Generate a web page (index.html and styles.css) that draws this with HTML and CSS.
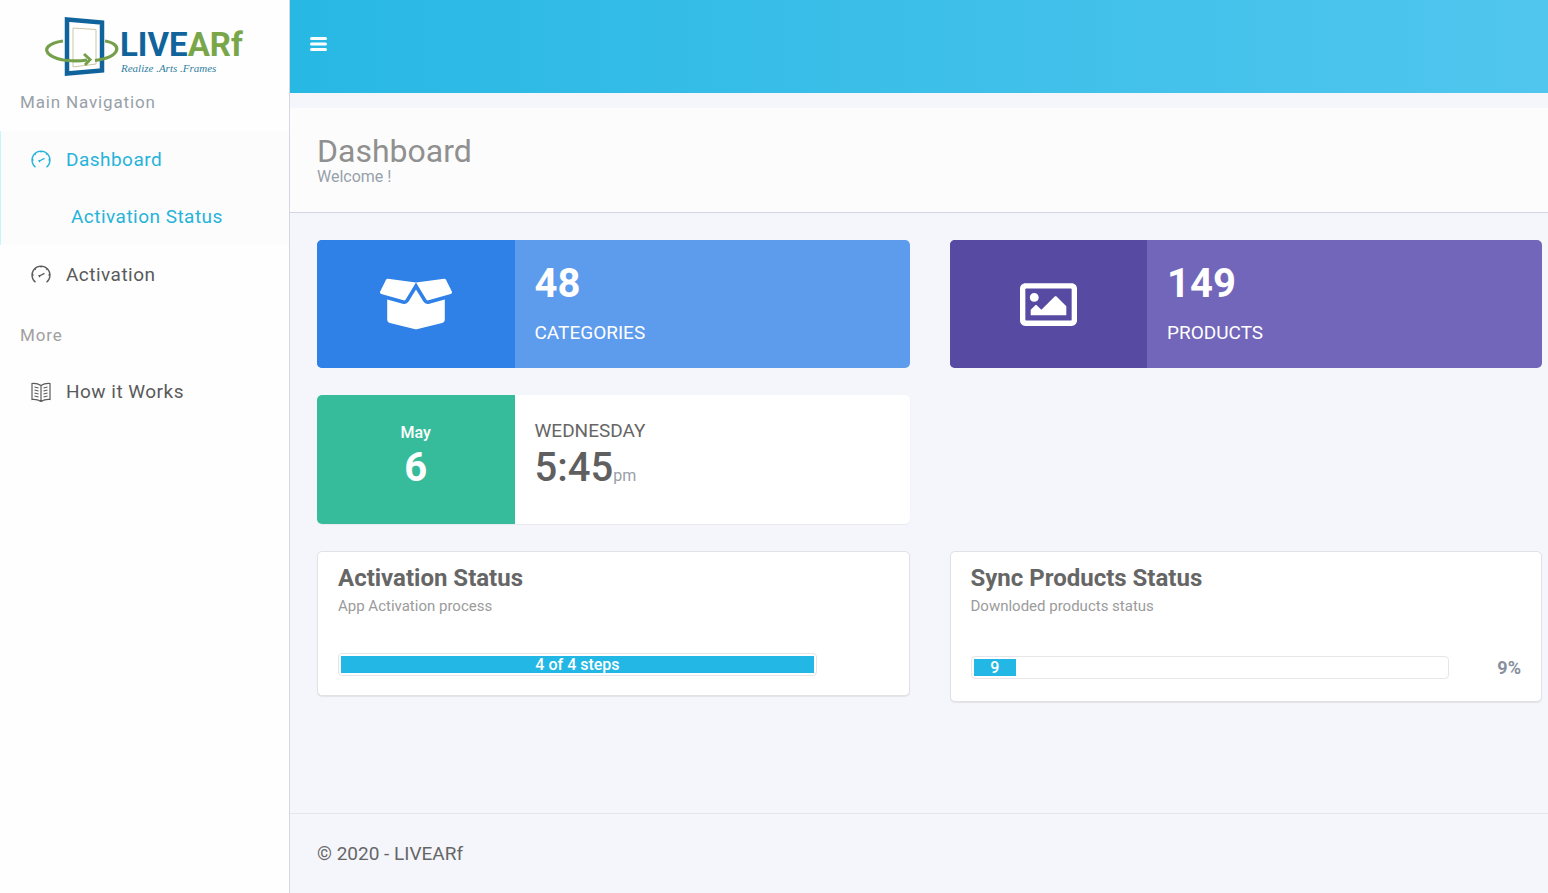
FILE: index.html
```html
<!DOCTYPE html>
<html lang="en">
<head>
<meta charset="utf-8">
<title>Dashboard - LIVEARf</title>
<link rel="stylesheet" href="styles.css">
</head>
<body>
<svg class="sprite" aria-hidden="true">
  <symbol id="gauge" viewBox="0 0 20 20">
    <path d="M4.500 17.200A9 9 0 1 1 15.500 17.200M8.300 11L13.500 8.300M7.600 10.200l1.400 1.900M10 1v1.600M3.600 3.600l1.100 1.100M16.400 3.600l-1.100 1.100M1 10h1.600M17.400 10h1.600" fill="none" stroke="currentColor" stroke-width="1.300"/>
  </symbol>
</svg>
<div class="app">
  <aside class="sidebar">
    <a class="logo" href="#" aria-label="LIVEARf home">
      <svg viewBox="0 0 200 66" role="img" aria-label="LIVEARf">
        <path d="M22 9.500L57 12.500V60.500L22 63.500Z" fill="#fff" stroke="#10649b" stroke-width="4.500"/>
        <path d="M28 18L51 19.500V54L28 57Z" fill="none" stroke="#c9c7a8" stroke-width="1"/>
        <path d="M18 31C4 33-3 39 5 45C13 51 31 52 42 50" fill="none" stroke="#75a04b" stroke-width="3.200"/>
        <path d="M39 44L45 49.500L40 55" fill="none" stroke="#75a04b" stroke-width="3"/>
        <path d="M50 50.500C76 47 78 34 60 31" fill="none" stroke="#75a04b" stroke-width="3.200"/>
        <text class="logo-name" x="75" y="46"><tspan fill="#10649b">LIVE</tspan><tspan fill="#7aa64a">ARf</tspan></text>
        <text class="logo-tag" x="76" y="62">Realize .Arts .Frames</text>
      </svg>
    </a>
    <nav aria-label="Main">
      <h2 class="nav-title">Main Navigation</h2>
      <ul class="nav-list">
        <li class="nav-group">
          <a class="nav-link" href="#"><svg class="nav-icon"><use href="#gauge"/></svg>Dashboard</a>
          <a class="nav-link nav-sub" href="#">Activation Status</a>
        </li>
        <li><a class="nav-link" href="#"><svg class="nav-icon"><use href="#gauge"/></svg>Activation</a></li>
      </ul>
      <h2 class="nav-title nav-more">More</h2>
      <ul class="nav-list">
        <li><a class="nav-link" href="#">
          <svg class="nav-icon" viewBox="0 0 20 20"><path d="M1 1.500Q6 1 10 3.500Q14 1 19 1.500V17.500Q14 17 10 19.500Q6 17 1 17.500ZM10 3.500V19.500M3.500 5l4 1M3.500 8l4 1M3.500 11l4 1M3.500 14l4 1M16.500 5l-4 1M16.500 8l-4 1M16.500 11l-4 1M16.500 14l-4 1" fill="none" stroke="currentColor" stroke-width="1.200"/></svg>How it Works</a></li>
      </ul>
    </nav>
  </aside>
  <div class="page">
    <header class="topbar">
      <button class="menu" type="button" aria-label="Toggle menu">
        <svg viewBox="0 0 18 16"><path d="M1.500 2.500H15.500M1.500 8H15.500M1.500 13.500H15.500" stroke="#fff" stroke-width="3" stroke-linecap="round"/></svg>
      </button>
    </header>
    <div class="heading">
      <h1>Dashboard</h1>
      <p>Welcome !</p>
    </div>
    <main class="cards">
      <section class="tile blue">
        <div class="tile-side">
          <svg class="box-icon" viewBox="0 0 640 512"><path fill="#fff" d="M425.700 256c-16.900 0-32.800-9-41.400-23.400L320 126l-64.200 106.600c-8.700 14.500-24.600 23.500-41.500 23.500-4.500 0-9-.6-13.300-1.900L64 215v178c0 14.700 10 27.500 24.200 31l216.200 54.100c10.200 2.500 20.900 2.500 31 0L551.800 424c14.200-3.600 24.200-16.400 24.200-31V215l-137 39.100c-4.300 1.300-8.800 1.900-13.300 1.900zm212.600-112.200L586.800 41c-3.100-6.200-9.800-9.800-16.700-8.900L320 64l91.700 152.100c3.800 6.300 11.400 9.300 18.500 7.300l197.900-56.500c9.900-2.900 14.700-13.900 10.200-23.100zM53.200 41L1.700 143.800c-4.600 9.200.3 20.200 10.100 23l197.900 56.500c7.100 2 14.700-1 18.500-7.300L320 64 69.800 32.100c-6.900-.8-13.500 2.700-16.600 8.900z"/></svg>
        </div>
        <div class="tile-body"><strong class="big">48</strong><span class="label">CATEGORIES</span></div>
      </section>
      <section class="tile purple">
        <div class="tile-side">
          <svg class="image-icon" viewBox="0 0 512 512"><path fill="#fff" d="M464 64H48C21.490 64 0 85.490 0 112v288c0 26.510 21.490 48 48 48h416c26.510 0 48-21.490 48-48V112c0-26.510-21.490-48-48-48zm-6 336H54a6 6 0 0 1-6-6V118a6 6 0 0 1 6-6h404a6 6 0 0 1 6 6v276a6 6 0 0 1-6 6zM128 152c-22.091 0-40 17.909-40 40s17.909 40 40 40 40-17.909 40-40-17.909-40-40-40zM96 352h320v-80l-87.515-87.515c-4.686-4.686-12.284-4.686-16.971 0L192 304l-39.515-39.515c-4.686-4.686-12.284-4.686-16.971 0L96 304v48z"/></svg>
        </div>
        <div class="tile-body"><strong class="big">149</strong><span class="label">PRODUCTS</span></div>
      </section>
      <section class="tile date">
        <div class="tile-side"><span class="month">May</span><strong class="big">6</strong></div>
        <div class="tile-body"><span class="label">WEDNESDAY</span><div class="time"><span class="big">5:45</span><span class="pm">pm</span></div></div>
      </section>
      <section class="panel first">
        <h3>Activation Status</h3>
        <p>App Activation process</p>
        <div class="meter">
          <div class="track" role="progressbar" aria-label="Activation steps" aria-valuemin="0" aria-valuemax="4" aria-valuenow="4"><div class="fill" style="width:100%">4 of 4 steps</div></div>
        </div>
      </section>
      <section class="panel">
        <h3>Sync Products Status</h3>
        <p>Downloded products status</p>
        <div class="meter">
          <div class="track" role="progressbar" aria-label="Synced products" aria-valuenow="9"><div class="fill" style="width:9%">9</div></div>
          <strong class="percent">9%</strong>
        </div>
      </section>
    </main>
    <footer class="footer">© 2020 - LIVEARf</footer>
  </div>
</div>
</body>
</html>
```
FILE: styles.css
```css
* { box-sizing: border-box; }
body, h1, h2, h3, p, ul { margin: 0; padding: 0; }
body { font: 16px/24px Roboto, "Liberation Sans", sans-serif; color: #666; background: #f5f6fb; }
a { color: inherit; text-decoration: none; }
ul { list-style: none; }
svg { display: block; }
.sprite { position: absolute; width: 0; height: 0; }
.app { display: flex; min-height: 100vh; }

.sidebar { flex: 0 0 290px; background: #fefefe; border-right: 1px solid #d5d7e3; }
.logo { display: block; width: 200px; margin: 10px 0 0 45px; }
.logo svg { width: 100%; overflow: visible; }
.logo-name { font: bold 33px Roboto, sans-serif; }
.logo-tag { font: italic 11px "Liberation Serif", serif; fill: #2f7fa0; }
.nav-title { padding: 14px 20px 17px; font-size: 17px; line-height: 24px; font-weight: 400; letter-spacing: 0.05em; color: #98a0a8; }
.nav-more { padding: 20px 20px 16px; color: #a0a0a0; }
.nav-link { display: flex; align-items: center; gap: 15px; height: 57px; padding-left: 31px; font-size: 19px; letter-spacing: 0.025em; color: #5a5a5a; }
.nav-group { margin-bottom: 1px; background: #fcfcfd; box-shadow: inset 1px 0 #c5f6fc; }
.nav-group .nav-link { color: #26b3d9; }
.nav-group .nav-sub { padding-left: 71px; }
.nav-icon { width: 20px; height: 20px; }

.page { flex: 1; min-width: 0; display: flex; flex-direction: column; }
.topbar { display: flex; align-items: center; height: 93px; padding: 0 20px 5px; background: linear-gradient(90deg, #28b8e4, #50c6ee); }
.menu { padding: 0; border: 0; background: none; cursor: pointer; }
.menu svg { width: 18px; height: 16px; }
.heading { margin-top: 15px; padding: 27px 27px 25px; background: #fcfcfd; border-bottom: 1px solid #d2d5e2; }
.heading h1 { font-size: 32px; line-height: 32px; font-weight: 400; color: #909090; }
.heading p { line-height: 20px; color: #98a0aa; }

.cards { flex: 1; display: grid; grid-template-columns: 1fr 1fr; align-content: start; align-items: start; gap: 27px 40px; padding: 27px 6px 27px 27px; }
.tile { display: grid; grid-template-columns: 1fr 2fr; height: 128px; border-radius: 5px; overflow: hidden; color: #fff; }
.tile-side { display: flex; flex-direction: column; align-items: center; justify-content: center; }
.tile-body { display: flex; flex-direction: column; padding: 21px 20px; }
.box-icon { width: 72px; height: 58px; }
.image-icon { width: 57px; height: 57px; }
.blue { background: #5d9bec; }
.blue .tile-side { background: #2f80e7; }
.purple { background: #7266ba; }
.purple .tile-side { background: #564aa3; }
.big { font-size: 40px; line-height: 46px; font-weight: 700; }
.label { margin-top: 13px; font-size: 19px; line-height: 26px; }
.date { grid-column: 1; height: 129px; background: #fff; color: #666; box-shadow: 0 1px 1px #e9e9ef; }
.date .tile-side { background: #37bc9b; color: #fff; padding-bottom: 8px; }
.month { line-height: 24px; font-weight: 500; }
.date .tile-body { padding-top: 23px; }
.date .label { margin: 0; }
.time { display: flex; align-items: baseline; color: #5f5f5f; }
.time .big { line-height: 48px; font-weight: 500; }
.pm { color: #98a0a8; }

.panel { grid-column: 2; padding: 12px 20px 22px; background: #fff; border: 1px solid #e1e1e6; border-radius: 5px; box-shadow: 0 1px 1px #e3e3e8; }
.panel.first { grid-column: 1; padding-bottom: 19px; }
.panel h3 { font-size: 24px; line-height: 28px; font-weight: 700; }
.panel p { padding-top: 3px; font-size: 15px; line-height: 22px; color: #9b9b9b; }
.meter { display: flex; align-items: center; justify-content: space-between; margin-top: 39px; }
.first .meter { margin-top: 36px; }
.track { flex: 0 0 87%; padding: 2px; border: 1px solid #e6e6ea; border-radius: 4px; }
.fill { height: 17px; background: #23b7e5; color: #fff; line-height: 18px; font-weight: 500; text-align: center; }
.percent { font-size: 18px; line-height: 22px; color: #87909c; }

.footer { padding: 28px 27px; border-top: 1px solid #e4e5ed; font-size: 19px; line-height: 23px; }
```
